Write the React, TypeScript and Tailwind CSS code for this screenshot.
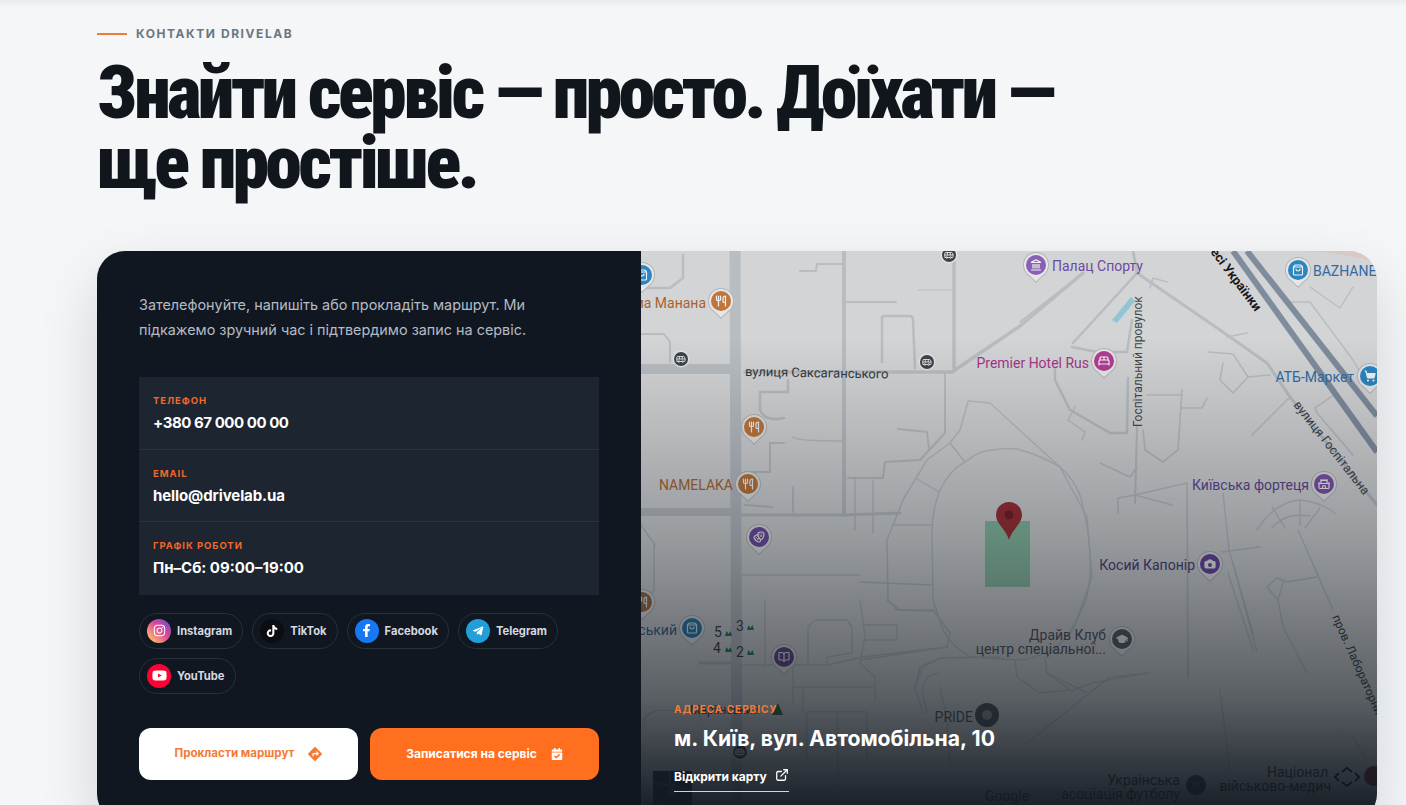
import { ComponentType, ReactNode } from "react"
import { ExternalLink, Utensils, Bus, ShoppingBag, ShoppingCart, Landmark, Camera, GraduationCap, BedDouble, Drama, BookOpen, Castle } from "lucide-react"
import { FaCalendarCheck, FaDirections, FaFacebookF, FaInstagram, FaTelegramPlane, FaTiktok, FaYoutube } from "react-icons/fa"

const contacts = [
  { label: "ТЕЛЕФОН", value: "+380 67 000 00 00", tracking: "tracking-[-0.45px]" },
  { label: "EMAIL", value: "hello@drivelab.ua", tracking: "tracking-[-0.1px]" },
  { label: "ГРАФІК РОБОТИ", value: "Пн–Сб: 09:00–19:00", tracking: "tracking-normal" },
]

const socials = [
  { name: "Instagram", icon: FaInstagram, bg: "bg-[linear-gradient(45deg,#fdc468_10%,#df4996_55%,#5b4fd0)]", size: 13 },
  { name: "TikTok", icon: FaTiktok, bg: "bg-[#0b0d10]", size: 12 },
  { name: "Facebook", icon: FaFacebookF, bg: "bg-[#1877f2]", size: 13 },
  { name: "Telegram", icon: FaTelegramPlane, bg: "bg-[#229ed9]", size: 12 },
  { name: "YouTube", icon: FaYoutube, bg: "bg-[#ff0033]", size: 15 },
]

// thick = avenues, thin = courtyards; coords are page pixels (see viewBox)
const roads: { d: string; w: number }[] = [
  { d: "M735 251 L737 822", w: 11 },
  { d: "M641 369 H735", w: 10 },
  { d: "M745 372 H952 L1020 326 L1083 273", w: 3.5 },
  { d: "M844 251 V515", w: 4 },
  { d: "M954 251 V368", w: 3.5 },
  { d: "M641 512 H735", w: 8 },
  { d: "M740 515 H844 L900 513", w: 3 },
  { d: "M641 334 H664 L670 342 V362", w: 2 },
  { d: "M641 288 H670 L683 278 V255", w: 2.5 },
  { d: "M800 271 H816 L817 264 H844", w: 2 },
  { d: "M846 302 H896", w: 2 },
  { d: "M882 362 V318 Q882 316 885 316 H910 Q913 316 913 320 L915 368", w: 2.5 },
  { d: "M918 290 H954", w: 1.2 },
  { d: "M788 380 V392 H760 V410 Q765 422 784 418", w: 2.5 },
  { d: "M784 443 H770 L770 472 H745", w: 2 },
  { d: "M793 487 V512 M745 505 L772 507", w: 1.8 },
  { d: "M793 437 Q795 441 844 441", w: 1.5 },
  { d: "M945 372 V433 L920 460 L885 462 L883 478 H848", w: 2 },
  { d: "M898 429 L927 432 L929 450", w: 1.8 },
  { d: "M855 478 V530 M873 480 V533 M860 514 H893", w: 1.4 },
  // ring round the stadium
  { d: "M965 462 Q980 450 993 450 Q1005 448 1017 449 Q1040 455 1060 467 Q1080 485 1083 507 Q1092 545 1090 577 Q1088 600 1080 613 Q1070 635 1057 647 Q1035 660 1017 660 L970 657 Q950 645 943 630 L933 600 L932 533 Q932 510 940 490 Q950 470 965 462Z", w: 1.4 },
  { d: "M968 402 L960 430 L950 443 L927 460 L903 500 L887 540 L888 600 L897 610 L933 611", w: 1.5 },
  { d: "M950 443 L965 462 M917 479 L939 492 M893 525 H932 M860 582 L932 585", w: 1.3 },
  { d: "M968 401 L990 403 L1060 467 L1087 517 L1092 577 L1073 630 L1047 657", w: 1.3 },
  { d: "M915 690 L920 667 L940 658 L1000 657 M860 660 L947 647 L950 633 L933 610 H900 L887 600", w: 1.4 },
  { d: "M1015 660 L1017 677 L1040 693 L1073 690 L1093 683 L1147 673 M1045 657 L1047 673 L1073 692", w: 1.3 },
  { d: "M1133 251 L1137 273 L1220 330 L1267 363 L1290 397 L1377 505", w: 3 },
  { d: "M1150 288 L1153 278 L1167 282 M1020 322 L1083 273", w: 1.6 },
  { d: "M1137 273 L1073 343", w: 2.5 },
  { d: "M1072 347 L1097 352 L1127 352 L1132 320", w: 2.5 },
  { d: "M1055 368 V380 L1070 410 L1110 433 H1127 L1128 378", w: 2.5 },
  { d: "M1075 407 L1068 420 L1085 432 L1082 440", w: 1.3 },
  { d: "M1137 427 L1135 503", w: 2 },
  { d: "M1143 430 L1145 450 L1163 462 L1178 450 L1182 390 M1147 395 H1182 M1182 408 H1202 L1207 398", w: 1.6 },
  { d: "M1208 352 L1233 354 L1248 377 L1270 375 M1223 363 L1220 380 L1233 393 L1248 377 M1227 337 L1247 333", w: 1.6 },
  { d: "M1252 435 L1290 397", w: 1.5 },
  { d: "M1287 302 H1310 L1353 360 L1363 377 M1310 287 L1340 308 L1353 287", w: 1.4 },
  { d: "M1337 393 L1315 408 L1317 413 L1353 455", w: 1.5 },
  { d: "M1100 463 L1130 477 L1137 467 M1118 513 V498 L1135 495 L1172 505 M1135 495 L1187 483 L1188 678", w: 1.6 },
  { d: "M1223 493 L1229 550 L1253 633 M1222 552 L1260 547", w: 1.4 },
  { d: "M1257 530 Q1275 502 1300 500 Q1320 502 1335 513 M1272 528 Q1285 512 1310 516 M1272 507 L1285 528 M1300 500 V525 M1320 508 L1305 528", w: 1.4 },
  { d: "M1298 530 L1333 610 M1267 587 L1277 578 L1287 582 L1317 577 M1267 587 L1278 600 L1283 583 M1278 600 L1283 627 L1307 673", w: 1.4 },
  { d: "M1228 573 L1253 650 M1233 563 L1257 652 M1220 690 L1230 770", w: 1.3 },
  { d: "M1027 743 L1110 677 L1150 673 M1047 673 L1087 693 M1337 733 L1353 737 L1367 760", w: 1.2 },
  { d: "M654 545 V590 L650 595 M641 525 L655 545", w: 1.6 },
  { d: "M700 663 H735", w: 3 },
  { d: "M743 665 H827 L863 657 L947 647 M765 600 V667 M743 575 H860", w: 1.4 },
  { d: "M808 663 V627 L815 620 H847 L852 627 V653 L827 657 V663", w: 1.5 },
  { d: "M863 625 H897 V640 H863 M860 600 L865 637 L860 663 L875 677 V700", w: 1.3 },
  { d: "M793 687 H873 M793 667 V703 M803 687 V712 M808 712 H867 V760 M807 712 V760 M837 712 L838 787", w: 1.3 },
  { d: "M923 713 L915 687 L923 667 L943 657 M940 673 L927 677 L922 690 L927 713 M940 687 L947 720 L950 767", w: 1.3 },
  { d: "M645 725 Q640 715 660 710 L700 712 V720", w: 1.4 },
]

type PinIcon = ComponentType<{ x?: number; y?: number; size?: number; color?: string; strokeWidth?: number; fill?: string }>

const pins: { x: number; y: number; c: string; icon: PinIcon; solid?: boolean }[] = [
  { x: 642, y: 275, c: "#2a85c0", icon: ShoppingBag },
  { x: 721, y: 301, c: "#c0763a", icon: Utensils },
  { x: 754, y: 427, c: "#c0763a", icon: Utensils },
  { x: 748, y: 484, c: "#b9743b", icon: Utensils },
  { x: 759, y: 537, c: "#6c4aa0", icon: Drama },
  { x: 642, y: 602, c: "#9c6a3d", icon: Utensils },
  { x: 692, y: 628, c: "#2578ae", icon: ShoppingBag },
  { x: 784, y: 657, c: "#5d4388", icon: BookOpen },
  { x: 1036, y: 265, c: "#8a5fb8", icon: Landmark },
  { x: 1104, y: 361, c: "#b03c92", icon: BedDouble },
  { x: 1298, y: 270, c: "#2a85c0", icon: ShoppingBag },
  { x: 1370, y: 376, c: "#2a85c0", icon: ShoppingCart, solid: true },
  { x: 1324, y: 484, c: "#7a52a8", icon: Castle },
  { x: 1210, y: 564, c: "#65429e", icon: Camera, solid: true },
  { x: 1122, y: 639, c: "#52565c", icon: GraduationCap, solid: true },
]

const labels: { t: string; x: number; y: number; c: string; s?: number; a?: "start" | "end"; r?: number; b?: boolean }[] = [
  { t: "ма Манана", x: 706, y: 308, c: "#a9632e", a: "end" },
  { t: "NAMELAKA", x: 733, y: 490, c: "#a9632e", a: "end" },
  { t: "вулиця Саксаганського", x: 745, y: 376, c: "#33373c", s: 13, r: 1 },
  { t: "Палац Спорту", x: 1052, y: 271, c: "#6d4aa0" },
  { t: "Premier Hotel Rus", x: 1089, y: 368, c: "#a5348a", a: "end" },
  { t: "BAZHANE", x: 1313, y: 276, c: "#2e6ba8" },
  { t: "АТБ-Маркет", x: 1354, y: 382, c: "#2e6ba8", a: "end" },
  { t: "Київська фортеця", x: 1309, y: 490, c: "#5c4490", a: "end" },
  { t: "Косий Капонір", x: 1195, y: 570, c: "#453a78", a: "end" },
  { t: "Драйв Клуб", x: 1106, y: 640, c: "#4a4c50", a: "end" },
  { t: "центр спеціальної...", x: 1106, y: 654, c: "#4a4c50", a: "end" },
  { t: "ський", x: 677, y: 635, c: "#2f5f88", a: "end" },
  { t: "PRIDE", x: 973, y: 722, c: "#4a4d53", a: "end" },
  { t: "Українська", x: 1180, y: 785, c: "#2c3138", a: "end" },
  { t: "асоціація футболу", x: 1180, y: 799, c: "#2c3138", a: "end" },
  { t: "Націонал", x: 1328, y: 777, c: "#2c2f35", a: "end" },
  { t: "військово-медич", x: 1331, y: 791, c: "#2c2f35", a: "end" },
  { t: "есі Українки", x: 1210, y: 252, c: "#17191c", s: 13, r: 53, b: true },
  { t: "Госпітальний провулок", x: 1142, y: 427, c: "#44474b", s: 12, r: -90 },
  { t: "вулиця Госпітальна", x: 1293, y: 405, c: "#3c3f44", s: 12.5, r: 52 },
  { t: "пров. Лабораторни", x: 1332, y: 617, c: "#33363a", s: 12, r: 66 },
  { t: "Маріїнський", x: 690, y: 714, c: "#353a42", s: 12 },
  { t: "5", x: 714, y: 637, c: "#33373c", s: 14 },
  { t: "3", x: 736, y: 631, c: "#33373c", s: 14 },
  { t: "4", x: 713, y: 653, c: "#33373c", s: 14 },
  { t: "2", x: 736, y: 657, c: "#33373c", s: 14 },
]

function Pin({ x, y, c, icon: Icon, solid }: { x: number; y: number; c: string; icon: PinIcon; solid?: boolean }) {
  return (
    <g>
      <path d={`M${x - 11} ${y + 7} L${x} ${y + 18} L${x + 11} ${y + 7} Z`} fill="#b4b5b7" />
      <circle cx={x} cy={y} r={13} fill="#b4b5b7" />
      <path d={`M${x - 10} ${y + 7} L${x} ${y + 16.5} L${x + 10} ${y + 7} Z`} fill="#e6e6e6" />
      <circle cx={x} cy={y} r={12} fill="#e6e6e6" />
      <circle cx={x} cy={y} r={10} fill={c} />
      <Icon x={x - 6} y={y - 6} size={12} color="#f4f4f4" strokeWidth={2.4} fill={solid ? "#f4f4f4" : "none"} />
    </g>
  )
}

function MapPicture() {
  return (
    <svg className="absolute inset-0 h-full w-full" viewBox="641 251 736 571" preserveAspectRatio="none" fontFamily="Roboto, sans-serif">
      <rect x="641" y="251" width="736" height="571" fill="#d3d4d5" />
      <path d="M1300 251 H1377 V262 Q1340 252 1300 251Z" fill="#d9c9c6" />
      {roads.map((r, i) => (
        <path key={i} d={r.d} fill="none" stroke="#b8bdc2" strokeWidth={r.w} strokeLinejoin="round" strokeLinecap="round" />
      ))}
      <path d="M1233 251 L1377 452" stroke="#7f8c9c" strokeWidth={6} fill="none" />
      <path d="M1247 251 L1377 416" stroke="#7f8c9c" strokeWidth={6} fill="none" />
      <path d="M1112 320 L1131 297 L1135 301 L1117 323 Z" fill="#92c5d4" />
      <rect x="985" y="521" width="45" height="66" fill="#88bda1" />
      {pins.map((p, i) => (
        <Pin key={i} {...p} />
      ))}
      <circle cx={1210} cy={565} r={2} fill="#65429e" />
      {[[681, 359], [927, 362], [949, 255], [740, 752]].map(([x, y]) => (
        <g key={`${x}-${y}`}>
          <circle cx={x} cy={y} r={8.5} fill="#e4e4e4" />
          <circle cx={x} cy={y} r={7} fill="#3d434b" />
          <Bus x={x - 5} y={y - 5} size={10} color="#e8e8e8" strokeWidth={2.2} />
        </g>
      ))}
      <circle cx={987} cy={715} r={12} fill="#4a4d52" />
      <circle cx={987} cy={715} r={5} fill="#8b8d90" />
      <circle cx={1196} cy={785} r={10} fill="#3a3f47" />
      <circle cx={1196} cy={785} r={4} fill="#555a62" />
      <circle cx={1374} cy={776} r={10} fill="#7d2330" />
      {labels.map((l, i) => (
        <text
          key={i}
          x={l.x}
          y={l.y}
          fill={l.c}
          fontSize={l.s ?? 14}
          fontWeight={l.b ? 700 : 400}
          textAnchor={l.a ?? "start"}
          transform={l.r ? `rotate(${l.r} ${l.x} ${l.y})` : undefined}
        >
          {l.t}
        </text>
      ))}
      <path d="M725 636l1.5-5 2 3 2-3 1.5 5zM747 630l1.5-5 2 3 2-3 1.5 5zM725 652l1.5-5 2 3 2-3 1.5 5zM747 655l1.5-5 2 3 2-3 1.5 5z" fill="#1f7a4d" />
      <path d="M778 703 L783 715 H772 Z" fill="#1f6b45" />
      <path d="M1009 502 a13 13 0 0 1 13 13 c0 9 -10 14 -13 25 c-3 -11 -13 -16 -13 -25 a13 13 0 0 1 13 -13z" fill="#9c2a30" />
      <circle cx={1009} cy={515} r={4.5} fill="#6f1c22" />
      <path d="M1342 772 l5 -4 5 4 M1342 782 l5 4 5 -4 M1339 773 l-4 4 4 4 M1355 773 l4 4 -4 4" stroke="#161a20" fill="none" strokeWidth={2} />
      <rect x="653" y="771" width="39" height="40" fill="#242a30" />
      <path d="M653 782 L692 790 M670 771 V811 M680 775 L660 805" stroke="#4b5158" strokeWidth={2} />
      <circle cx={672} cy={792} r={5} fill="#4b5158" />
      <text x={985} y={801} fontSize={14} fill="#343b44">Google</text>
    </svg>
  )
}

function Button({ className, children }: { className: string; children: ReactNode }) {
  return <a className={`flex h-[52px] items-center justify-center gap-[14px] rounded-xl font-bold ${className}`}>{children}</a>
}

export default function App() {
  return (
    <div className="h-screen overflow-hidden bg-[#f4f6f8] bg-[linear-gradient(#e9eaec,#f4f6f8_7px)] font-['Inter',sans-serif]">
      <div className="pl-[97px] pr-[29px] pt-[27px]">
        <div className="flex h-[14px] items-center gap-[9px]">
          <span className="h-[2px] w-[30px] bg-[#f07b34]" />
          <span className="text-[12px] font-bold tracking-[0.13em] text-[#6b7683]">КОНТАКТИ DRIVELAB</span>
        </div>
        <h1 className="mt-[17px] font-['Roboto',sans-serif] text-[74px] leading-[70px] font-black tracking-[-0.05em] text-[#11161d] [font-stretch:75%]">
          Знайти сервіс — просто. Доїхати —<br />ще простіше.
        </h1>

        <section className="mt-[53px] flex rounded-[28px] shadow-[0_24px_60px_rgba(17,24,32,0.14)]">
          <div className="w-[544px] shrink-0 rounded-l-[28px] bg-[#111720] px-[42px] pt-[41px] pb-[42px]">
            <p className="w-[400px] text-[14.4px] leading-[25px] text-[#b4bbc5]">
              Зателефонуйте, напишіть або прокладіть маршрут. Ми підкажемо зручний час і підтвердимо запис на сервіс.
            </p>
            <div className="mt-[35px] divide-y divide-[#2a333e] bg-[#1c2530]">
              {contacts.map((c) => (
                <div key={c.label} className="h-[72.67px] px-[14px] pt-[18px]">
                  <div className="text-[9.5px] leading-[12px] font-bold tracking-[0.1em] text-[#f0682a]">{c.label}</div>
                  <div className={`mt-[5px] text-[15px] leading-[22px] font-bold text-white ${c.tracking}`}>{c.value}</div>
                </div>
              ))}
            </div>
            <div className="mt-[18px] flex flex-wrap gap-[9px]">
              {socials.map(({ name, icon: Icon, bg, size }) => (
                <a key={name} className="flex h-[36px] items-center gap-[6px] rounded-full border border-[#2a303a] pr-[10px] pl-[7px]">
                  <span className={`flex h-[24px] w-[24px] items-center justify-center rounded-full text-white ${bg}`}>
                    <Icon size={size} />
                  </span>
                  <span className="text-[11.2px] font-bold text-[#d5d9e0]">{name}</span>
                </a>
              ))}
            </div>
            <div className="mt-[34px] flex gap-[12px]">
              <Button className="w-[219px] bg-white text-[11.6px] text-[#f47a35]">
                Прокласти маршрут
                <FaDirections size={14} className="text-[#f47a35]" />
              </Button>
              <Button className="w-[229px] bg-[#ff6f1f] text-[12px] text-white">
                Записатися на сервіс
                <FaCalendarCheck size={12} className="text-white" />
              </Button>
            </div>
          </div>

          <div className="relative flex-1 overflow-hidden rounded-r-[28px]">
            <MapPicture />
            <div className="absolute inset-0 bg-[linear-gradient(rgba(17,24,32,0)_15%,rgba(17,24,32,0.3)_50%,rgba(17,24,32,0.62)_78%,rgba(17,24,32,0.95)_97%)]" />
            <div className="absolute top-[452px] left-[33px] text-white">
              <div className="text-[10px] leading-[12px] font-bold tracking-[0.1em] text-[#f47a35]">АДРЕСА СЕРВІСУ</div>
              <div className="mt-[9px] text-[21.2px] leading-[28px] font-bold">м. Київ, вул. Автомобільна, 10</div>
              <a className="mt-[16px] flex w-[115px] items-center gap-[8px] border-b border-white/80 pb-[5px] text-[12px] leading-[18px] font-bold">
                Відкрити карту
                <ExternalLink size={14} strokeWidth={2.2} className="-translate-y-[2px]" />
              </a>
            </div>
          </div>
        </section>
      </div>
    </div>
  )
}
